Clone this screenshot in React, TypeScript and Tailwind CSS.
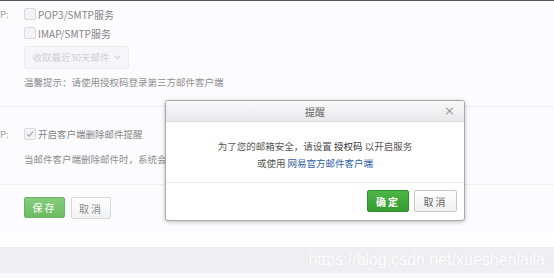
import React from 'react';

const cjk = { fontFamily: '"Noto Sans CJK SC", "Noto Sans", sans-serif' };

function Box({ checked = false }: { checked?: boolean }) {
  return (
    <span className="w-[12px] h-[12px] rounded-[2px] border border-[#dadadc] bg-[#f3f3f5] flex items-center justify-center shrink-0">
      {checked && (
        <svg width="8" height="8" viewBox="0 0 8 8">
          <path d="M1 4.2 L3.1 6.2 L7 1.6" fill="none" stroke="#ababad" strokeWidth="1.2" />
        </svg>
      )}
    </span>
  );
}

function Row({ label, children, className = '' }: { label?: string; children: React.ReactNode; className?: string }) {
  return (
    <div className={`flex items-center ${className}`}>
      <span className="w-[24px] shrink-0 text-[#a0a0a2]">{label}</span>
      {children}
    </div>
  );
}

export default function App() {
  return (
    <div className="relative w-[554px] h-[278px] overflow-hidden bg-[#fcfbfd] border-t border-[#555] text-[9.5px] text-[#858587]" style={cjk}>
      {/* first group */}
      <div className="pt-[6px] h-[106px] border-b border-[#f0eff2]">
        <Row label="P:" className="h-[14px]">
          <Box />
          <span className="ml-[2px] text-[10px]">POP3/SMTP服务</span>
        </Row>
        <Row className="h-[14px] mt-[5px]">
          <Box />
          <span className="ml-[2px] text-[10px]">IMAP/SMTP服务</span>
        </Row>
        <Row className="mt-[6px]">
          <div className="w-[105px] h-[23px] rounded-[3px] border border-[#ececee] bg-[#f6f6f8] flex items-center justify-center gap-[4px] text-[#cfcfd2]">
            <span>收取最近30天邮件</span>
            <svg width="7" height="5" viewBox="0 0 7 5">
              <path d="M1 1 L3.5 3.5 L6 1" fill="none" stroke="#cfcfd2" strokeWidth="1.1" />
            </svg>
          </div>
        </Row>
        <Row className="mt-[6px]">
          <span className="text-[#8e8e90]">温馨提示：请使用授权码登录第三方邮件客户端</span>
        </Row>
      </div>

      {/* second group */}
      <div className="pt-[20px] h-[78px] border-b border-[#f0eff2]">
        <Row label="P:" className="h-[14px]">
          <Box checked />
          <span className="ml-[2px]">开启客户端删除邮件提醒</span>
        </Row>
        <Row className="mt-[11px]">
          <span className="text-[#8e8e90]">当邮件客户端删除邮件时，系统会</span>
        </Row>
      </div>

      {/* actions */}
      <div className="flex gap-[6px] pl-[24px] pt-[12px] h-[48px]">
        <button className="w-[41px] h-[21px] rounded-[2px] bg-gradient-to-b from-[#86cc7c] to-[#6bbb62] border border-[#6ab361] text-white text-[10px] tracking-[2px]">
          保存
        </button>
        <button className="w-[40px] h-[22px] rounded-[2px] bg-gradient-to-b from-white to-[#f1f1f3] border border-[#d8d8da] text-[#8a8a8c] text-[10px] tracking-[2px]">
          取消
        </button>
      </div>

      <div className="h-[14px] bg-white" />
      <div className="h-[26px] bg-[#efeef0] flex items-center justify-end pr-[9px]">
        <span
          className="text-[16px] text-white"
          style={{ fontFamily: '"Liberation Sans", Arial, sans-serif', textShadow: '0 0 1px #d8d8da' }}
        >
          https://blog.csdn.net/xueshenlaila
        </span>
      </div>
      <div className="h-[4px] bg-[#f9f9fa]" />

      {/* dialog */}
      <div className="absolute left-[165px] top-[99px] w-[300px] h-[121px] rounded-[3px] border border-[#a8a8aa] bg-white shadow-[0_1px_4px_rgba(0,0,0,0.25)] flex flex-col overflow-hidden">
        <div className="relative h-[21px] shrink-0 bg-gradient-to-b from-[#f8f8f9] to-[#e9e9eb] border-b border-[#dcdcde] flex items-center justify-center text-[#666] text-[10px]">
          提醒
          <span className="absolute right-[9px] top-[3px] text-[#9a9a9a] text-[13px] leading-[14px]" style={{ fontFamily: '"DejaVu Sans", sans-serif' }}>×</span>
        </div>
        <div className="h-[61px] shrink-0 border-b border-[#ececee] flex flex-col items-center justify-center gap-[2px] text-[#555] text-[9.5px] pt-[5px]">
          <div>
            为了您的邮箱安全，请设置 <span className="text-[#333]">授权码</span> 以开启服务
          </div>
          <div>
            或使用 <span className="text-[#2e5fa8]">网易官方邮件客户端</span>
          </div>
        </div>
        <div className="flex-1 flex justify-end items-start gap-[5px] pr-[7px] pt-[7px]">
          <button className="w-[42px] h-[22px] rounded-[2px] bg-gradient-to-b from-[#4db546] to-[#369c31] border border-[#2f8f2b] text-white text-[10px] font-bold tracking-[2px]">
            确定
          </button>
          <button className="w-[43px] h-[22px] rounded-[2px] bg-gradient-to-b from-white to-[#f0f0f2] border border-[#c8c8ca] text-[#666] text-[10px] tracking-[2px]">
            取消
          </button>
        </div>
      </div>
    </div>
  );
}
